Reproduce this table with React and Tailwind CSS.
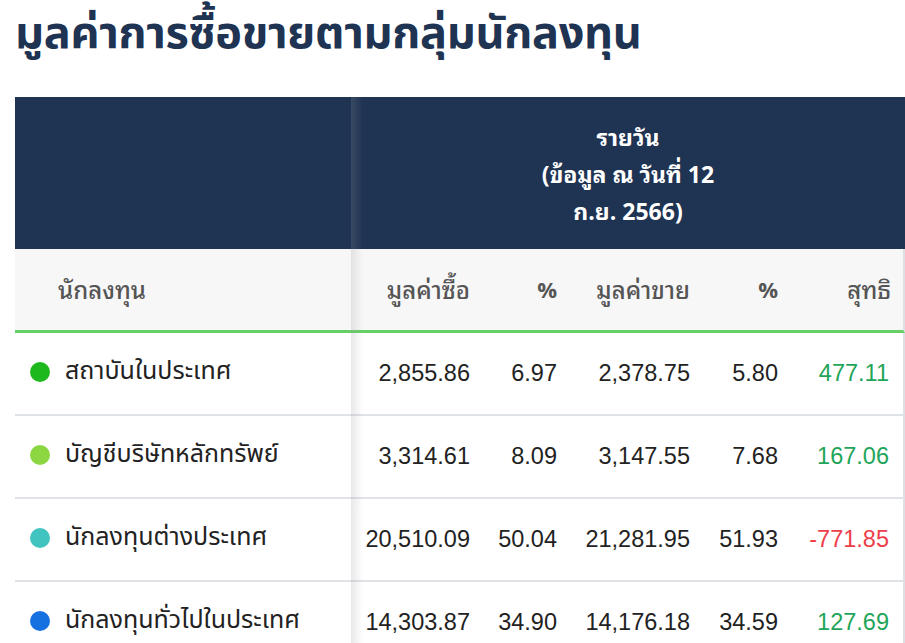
const rows = [
  { name: 'สถาบันในประเทศ', dot: 'bg-[#1cb81c]', buy: '2,855.86', buyPct: '6.97', sell: '2,378.75', sellPct: '5.80', net: '477.11', up: true },
  { name: 'บัญชีบริษัทหลักทรัพย์', dot: 'bg-[#8cd642]', buy: '3,314.61', buyPct: '8.09', sell: '3,147.55', sellPct: '7.68', net: '167.06', up: true },
  { name: 'นักลงทุนต่างประเทศ', dot: 'bg-[#41c3bf]', buy: '20,510.09', buyPct: '50.04', sell: '21,281.95', sellPct: '51.93', net: '-771.85', up: false },
  { name: 'นักลงทุนทั่วไปในประเทศ', dot: 'bg-[#1570e0]', buy: '14,303.87', buyPct: '34.90', sell: '14,176.18', sellPct: '34.59', net: '127.69', up: true },
];

const cols = 'grid grid-cols-[336px_135px_87px_133px_88px_111px]';

export default function App() {
  return (
    <div className="bg-white w-[905px] h-[643px] overflow-hidden font-['Noto_Sans_Thai','Noto_Sans',sans-serif]">
      <h1 className="px-[15px] pt-[6px] text-[45px] leading-[56px] font-bold text-[#1f3352] tracking-[-0.3px]">
        มูลค่าการซื้อขายตามกลุ่มนักลงทุน
      </h1>

      <div className="relative mt-[35px] ml-[15px] w-[890px]">
        <div className={`${cols} bg-[#1f3352] h-[152px]`}>
          <div />
          <div className="col-span-5 flex flex-col items-center justify-center text-white font-bold text-[23px] leading-[37px] pt-[2px] font-['Open_Sans','Noto_Sans_Thai_Looped',sans-serif]">
            <span>รายวัน</span>
            <span>(ข้อมูล ณ วันที่ 12</span>
            <span>ก.ย. 2566)</span>
          </div>
        </div>

        <div className={`${cols} bg-[#f7f7f7] h-[84px] border-b-[3px] border-[#66d066] items-center text-[24px] font-medium text-[#555] font-['Open_Sans','Noto_Sans_Thai_Looped',sans-serif] border-r-2 border-r-[#dde0e4]`}>
          <div className="pl-[43px]">นักลงทุน</div>
          <div className="text-right pr-[16px]">มูลค่าซื้อ</div>
          <div className="text-right pr-[16px] font-bold text-[22px]">%</div>
          <div className="text-right pr-[16px]">มูลค่าขาย</div>
          <div className="text-right pr-[16px] font-bold text-[22px]">%</div>
          <div className="text-right pr-[14px]">สุทธิ</div>
        </div>

        {rows.map((r) => (
          <div key={r.name} className={`${cols} h-[83px] border-b-2 border-[#dfe2e6] border-r-2 border-r-[#dde0e4] items-center text-[23.5px] text-[#222]`}>
            <div className="flex items-center gap-[15px] pl-[15px] pb-[4px]">
              <span className={`w-[20px] h-[20px] rounded-full ${r.dot}`} />
              <span className="text-[25px] font-['Noto_Sans_Thai',sans-serif]">{r.name}</span>
            </div>
            <div className="text-right pr-[16px] font-['Liberation_Sans',sans-serif]">{r.buy}</div>
            <div className="text-right pr-[16px] font-['Liberation_Sans',sans-serif]">{r.buyPct}</div>
            <div className="text-right pr-[16px] font-['Liberation_Sans',sans-serif]">{r.sell}</div>
            <div className="text-right pr-[16px] font-['Liberation_Sans',sans-serif]">{r.sellPct}</div>
            <div className={`text-right pr-[16px] font-['Liberation_Sans',sans-serif] ${r.up ? 'text-[#1fa55a]' : 'text-[#ee3e4a]'}`}>{r.net}</div>
          </div>
        ))}

        <div className="absolute top-0 bottom-0 left-[336px] w-[12px] bg-gradient-to-r from-[rgba(150,150,160,0.22)] to-transparent pointer-events-none" />
      </div>
    </div>
  );
}
